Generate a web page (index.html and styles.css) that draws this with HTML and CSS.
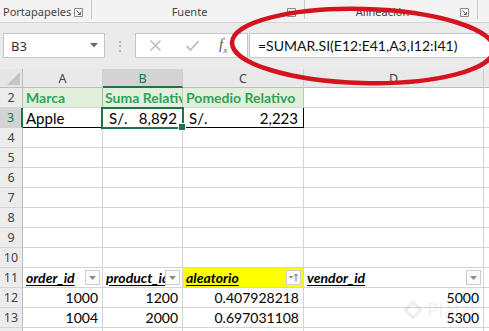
FILE: index.html
```html
<!DOCTYPE html>
<html lang="es">
<head>
<meta charset="utf-8">
<title>Excel</title>
<link rel="stylesheet" href="styles.css">
</head>
<body>
<div class="screen">
  <div class="ribbon">
    <div class="group g1">
      <span class="glabel">Portapapeles</span>
      <svg class="launch" width="9" height="9" viewBox="0 0 9 9"><path d="M0.5 8.5V0.5H8.5V8.5H0.5" fill="none" stroke="#8a8a8a"/><path d="M2.5 2.5L6.5 6.5M6.5 4V6.5H4" fill="none" stroke="#666"/></svg>
    </div>
    <div class="sep"></div>
    <div class="group g2">
      <span class="glabel">Fuente</span>
      <svg class="launch" width="9" height="9" viewBox="0 0 9 9"><path d="M0.5 8.5V0.5H8.5V8.5H0.5" fill="none" stroke="#8a8a8a"/><path d="M2.5 2.5L6.5 6.5M6.5 4V6.5H4" fill="none" stroke="#666"/></svg>
    </div>
    <div class="sep"></div>
    <div class="group g3">
      <span class="glabel">Alineación</span>
      <svg class="launch" width="9" height="9" viewBox="0 0 9 9"><path d="M0.5 8.5V0.5H8.5V8.5H0.5" fill="none" stroke="#8a8a8a"/><path d="M2.5 2.5L6.5 6.5M6.5 4V6.5H4" fill="none" stroke="#666"/></svg>
    </div>
    <div class="sep"></div>
  </div>

  <div class="fbar">
    <div class="namebox">
      <span class="nbtext">B3</span>
      <svg class="nbarrow" width="8" height="5" viewBox="0 0 8 5"><path d="M0 0H8L4 4.5Z" fill="#6a6a6a"/></svg>
    </div>
    <div class="dots">⋮</div>
    <div class="fbuttons">
      <svg class="fx-x" width="13" height="13" viewBox="0 0 13 13"><path d="M1.5 1.5L11.5 11.5M11.5 1.5L1.5 11.5" stroke="#bdbdbd" stroke-width="1.5"/></svg>
      <svg class="fx-ok" width="15" height="13" viewBox="0 0 15 13"><path d="M1.5 7L5.5 11L13.5 2" fill="none" stroke="#bdbdbd" stroke-width="1.8"/></svg>
      <span class="fx">f<sub>x</sub></span>
    </div>
    <div class="finput">=SUMAR.SI(E12:E41,A3,I12:I41)</div>
  </div>

  <div class="sheet">
    <div class="corner"><span class="tri"></span></div>
    <div class="ch">A</div>
    <div class="ch sel">B</div>
    <div class="ch">C</div>
    <div class="ch">D</div>
    <div class="ch last"></div>

    <div class="rh">2</div>
    <div class="c hd">Marca</div>
    <div class="c hd hdb">Suma Relativo</div>
    <div class="c hd hdc">Pomedio Relativo</div>
    <div class="c"></div>
    <div class="c last"></div>

    <div class="rh rsel">3</div>
    <div class="c r3">Apple</div>
    <div class="c r3 money active"><span>S/.</span><span>8,892</span></div>
    <div class="c r3 money cright"><span>S/.</span><span>2,223</span></div>
    <div class="c"></div>
    <div class="c last"></div>

    <div class="rh">4</div><div class="c"></div><div class="c"></div><div class="c"></div><div class="c"></div><div class="c last"></div>
    <div class="rh">5</div><div class="c"></div><div class="c"></div><div class="c"></div><div class="c"></div><div class="c last"></div>
    <div class="rh">6</div><div class="c"></div><div class="c"></div><div class="c"></div><div class="c"></div><div class="c last"></div>
    <div class="rh">7</div><div class="c"></div><div class="c"></div><div class="c"></div><div class="c"></div><div class="c last"></div>
    <div class="rh">8</div><div class="c"></div><div class="c"></div><div class="c"></div><div class="c"></div><div class="c last"></div>
    <div class="rh">9</div><div class="c"></div><div class="c"></div><div class="c"></div><div class="c"></div><div class="c last"></div>
    <div class="rh">10</div><div class="c"></div><div class="c"></div><div class="c"></div><div class="c"></div><div class="c last"></div>

    <div class="rh">11</div>
    <div class="c th"><span class="tht">order_id</span><span class="fbtn"><svg width="7" height="4" viewBox="0 0 7 4"><path d="M0 0H7L3.5 4Z" fill="#8c8c8c"/></svg></span></div>
    <div class="c th"><span class="tht">product_id</span><span class="fbtn"><svg width="7" height="4" viewBox="0 0 7 4"><path d="M0 0H7L3.5 4Z" fill="#8c8c8c"/></svg></span></div>
    <div class="c th yellow"><span class="tht">aleatorio</span><span class="fbtn"><svg width="11" height="9" viewBox="0 0 11 9"><path d="M1 3H5L3 5.5Z" fill="#777"/><path d="M8 8.5V1M6.2 2.8L8 1L9.8 2.8" fill="none" stroke="#777"/></svg></span></div>
    <div class="c th"><span class="tht">vendor_id</span><span class="fbtn"><svg width="7" height="4" viewBox="0 0 7 4"><path d="M0 0H7L3.5 4Z" fill="#8c8c8c"/></svg></span></div>
    <div class="c last"></div>

    <div class="rh">12</div>
    <div class="c num">1000</div>
    <div class="c num">1200</div>
    <div class="c num">0.407928218</div>
    <div class="c num">5000</div>
    <div class="c last"></div>

    <div class="rh">13</div>
    <div class="c num">1004</div>
    <div class="c num">2000</div>
    <div class="c num">0.697031108</div>
    <div class="c num">5300</div>
    <div class="c last"></div>

    <div class="rh">14</div><div class="c"></div><div class="c"></div><div class="c"></div><div class="c"></div><div class="c last"></div>
  </div>

  <div class="watermark"><span class="wm-logo"></span><span class="wm-text">Platzi</span></div>

  <svg class="annot" width="489" height="331" viewBox="0 0 489 331">
    <ellipse cx="363" cy="46" rx="131" ry="37" transform="rotate(1.5 363 46)" fill="none" stroke="#d3141f" stroke-width="4.5"/>
  </svg>
</div>
</body>
</html>
```

FILE: styles.css
```css
* { box-sizing: border-box; }
html, body { margin: 0; padding: 0; }
body { width: 489px; height: 331px; overflow: hidden; background: #fff; }

.screen {
  position: relative;
  width: 489px;
  height: 331px;
  overflow: hidden;
  font-family: Lato, "Liberation Sans", sans-serif;
}

/* Ribbon bottom strip */
.ribbon {
  height: 23px;
  display: flex;
  background: #f3f3f3;
  border-bottom: 1px solid #d6d6d6;
}
.group {
  display: flex;
  align-items: flex-end;
  padding-bottom: 3px;
  font-family: "Noto Sans", "Open Sans", sans-serif;
  font-size: 11px;
  color: #444;
}
.g1 { width: 91px; padding-left: 3px; }
.g1 .glabel { flex: 1; }
.g2 { width: 212px; }
.g2 .glabel, .g3 .glabel { flex: 1; text-align: center; }
.g3 { width: 172px; }
.launch { margin: 0 8px 2px 0; flex: none; }
.sep { width: 1px; height: 19px; background: #c8c8c8; }

/* Formula bar */
.fbar {
  height: 46px;
  background: #ebebeb;
  display: flex;
  align-items: flex-start;
  padding: 10px 0 0 3px;
}
.namebox {
  width: 102px;
  height: 25px;
  background: #fff;
  border: 1px solid #c6c6c6;
  display: flex;
  align-items: center;
  padding: 0 6px 0 7px;
  font-family: "Noto Sans", "Open Sans", sans-serif;
  font-size: 13px;
  color: #333;
}
.nbtext { flex: 1; }
.dots {
  width: 30px;
  height: 25px;
  text-align: center;
  line-height: 25px;
  color: #a8a8a8;
  font-size: 14px;
}
.fbuttons {
  width: 113px;
  height: 25px;
  background: #fff;
  border: 1px solid #c6c6c6;
  display: flex;
  align-items: center;
  padding-left: 13px;
}
.fx-x { margin-right: 23px; }
.fx-ok { margin-right: 19px; }
.fx {
  font-family: "Liberation Serif", serif;
  font-style: italic;
  font-size: 15px;
  color: #555;
}
.fx sub { font-size: 9px; }
.finput {
  flex: 1;
  height: 25px;
  margin-left: 1px;
  background: #fff;
  border: 1px solid #c6c6c6;
  border-right: none;
  padding-left: 8px;
  line-height: 23px;
  font-size: 14px;
  color: #111;
  white-space: nowrap;
}

/* Sheet grid */
.sheet {
  display: grid;
  grid-template-columns: 23px 80px 80px 121px 180px 5px;
  grid-template-rows: 19px repeat(13, 20px);
  font-size: 14px;
}
.corner {
  position: relative;
  background: #e6e6e6;
  border-right: 1px solid #bcbcbc;
  border-bottom: 1px solid #bcbcbc;
}
.tri {
  position: absolute;
  right: 2px;
  bottom: 2px;
  width: 0;
  height: 0;
  border-left: 13px solid transparent;
  border-bottom: 13px solid #c4c4c4;
}
.ch {
  background: #e9e9e9;
  border-right: 1px solid #cfcfcf;
  border-bottom: 1px solid #bcbcbc;
  text-align: center;
  line-height: 19px;
  color: #444;
  font-family: "Noto Sans", "Open Sans", sans-serif;
  font-size: 12.5px;
}
.ch.sel {
  background: #d3d3d3;
  color: #217346;
  border-bottom: 2px solid #217346;
}
.ch.last { border-right: none; }
.rh {
  background: #ececec;
  border-right: 1px solid #bcbcbc;
  border-bottom: 1px solid #d4d4d4;
  text-align: center;
  line-height: 20px;
  color: #444;
  font-family: "Noto Sans", "Open Sans", sans-serif;
  font-size: 12.5px;
}
.rh.rsel {
  background: #d3d3d3;
  color: #217346;
  border-right: 2px solid #217346;
}
.c {
  border-right: 1px solid #d4d4d4;
  border-bottom: 1px solid #d4d4d4;
  line-height: 20px;
  padding: 0 3px;
  white-space: nowrap;
  overflow: hidden;
  color: #000;
}
.c.last { border-right: none; }

.hd {
  background: #e2efda;
  color: #2ea35c;
  font-weight: bold;
  border-right-color: #b7cfb0;
}
.hdb { padding-left: 2px; border-left: 1px solid #9cc39c; margin-left: -1px; padding-right: 0; }
.r3 { border-bottom: 1px solid #000; font-size: 15px; }
.money { display: flex; justify-content: space-between; padding: 0 5px 0 6px; }
.cright { border-right: 1px solid #000; }
.active { position: relative; overflow: visible; }
.active::after {
  content: "";
  position: absolute;
  left: -2px;
  top: -1px;
  right: -2px;
  bottom: -2px;
  border: 2px solid #217346;
}
.active::before {
  content: "";
  position: absolute;
  right: -4px;
  bottom: -4px;
  width: 6px;
  height: 6px;
  background: #217346;
  border: 1px solid #fff;
  z-index: 2;
}

.th {
  display: flex;
  align-items: center;
  padding-right: 2px;
  font-weight: bold;
  font-style: italic;
}
.tht {
  flex: 1;
  overflow: hidden;
  text-decoration: underline;
  text-underline-offset: 2px;
}
.fbtn {
  flex: none;
  width: 15px;
  height: 15px;
  border: 1px solid #cdcdcd;
  background: #fbfbfb;
  display: flex;
  align-items: center;
  justify-content: center;
}
.yellow { background: #ffff00; }
.num { text-align: right; padding-right: 4px; font-size: 14px; }

/* Overlays */
.watermark {
  position: absolute;
  left: 406px;
  top: 299px;
  width: 83px;
  display: flex;
  align-items: center;
  gap: 7px;
  font-family: "Noto Sans", sans-serif;
  font-size: 19px;
  line-height: 22px;
  color: rgba(0, 0, 0, 0.07);
  pointer-events: none;
  white-space: nowrap;
}
.wm-logo {
  flex: none;
  width: 14px;
  height: 14px;
  border: 3px solid rgba(0, 0, 0, 0.07);
  transform: rotate(45deg);
}
.annot {
  position: absolute;
  left: 0;
  top: 0;
  pointer-events: none;
}
```
